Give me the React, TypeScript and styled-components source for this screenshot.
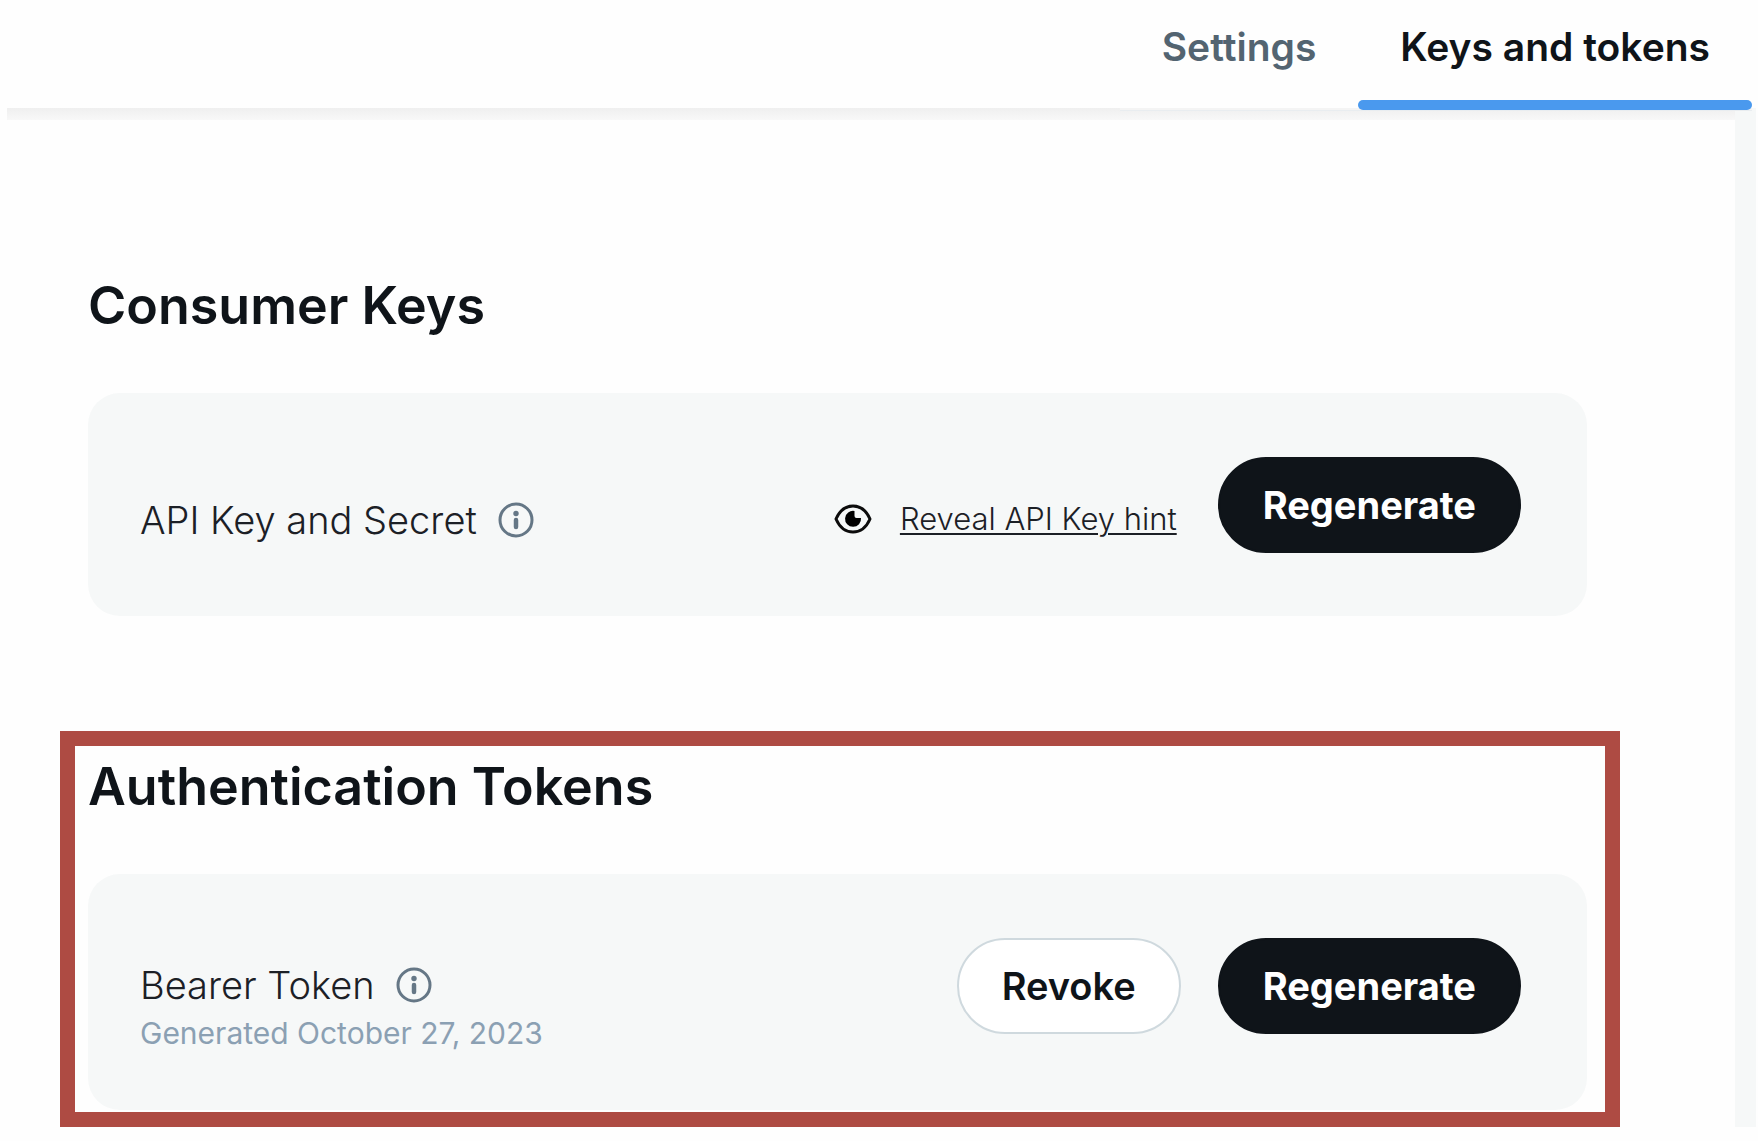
import React from 'react';
import styled, { createGlobalStyle } from 'styled-components';

const color = {
  ink: '#0f1419',
  text: '#1c2026',
  slate: '#536471',
  info: '#657786',
  muted: '#8ba0b3',
  accent: '#4a99ee',
  panel: '#f6f8f8',
  line: '#cfd9de',
  highlight: '#ae4b43',
};

const GlobalStyle = createGlobalStyle`
  *, *::before, *::after { box-sizing: border-box; }
  body {
    margin: 0;
    background: #fefefe;
    color: ${color.ink};
    font-family: Inter, 'Liberation Sans', sans-serif;
  }
`;

const Page = styled.div`
  display: flex;
  flex-direction: column;
  padding: 0 2px 14px 7px;
`;

const Header = styled.header`
  display: flex;
  justify-content: flex-end;
  padding-right: 4px;
`;

const Tabs = styled.nav`
  position: relative;
  display: flex;
  height: 108px;
  box-shadow: 0 2px 0 #f4f4f4, 0 3px 0 #e9edf0;
`;

const Tab = styled.a<{ $active?: boolean }>`
  position: relative;
  display: block;
  padding: 23px 42px 0;
  font-size: 39px;
  line-height: 48px;
  font-weight: 600;
  text-decoration: none;
  color: ${(p) => (p.$active ? color.ink : color.slate)};

  &::after {
    content: '';
    display: ${(p) => (p.$active ? 'block' : 'none')};
    position: absolute;
    left: 0;
    right: 0;
    bottom: -2px;
    height: 10px;
    border-radius: 5px;
    background: ${color.accent};
  }
`;

const Body = styled.div`
  display: flex;
  align-items: stretch;
`;

const Main = styled.main`
  flex: 1;
  min-width: 0;
`;

const HeaderShadow = styled.div`
  height: 12px;
  background: linear-gradient(#efefef, #f8f8f8);
`;

const Gutter = styled.aside`
  flex: none;
  width: 21px;
  background: ${color.panel};
`;

const Sections = styled.div`
  display: flex;
  flex-direction: column;
  gap: 98px;
  padding: 130px 115px 0 53px;
`;

const Section = styled.section<{ $highlighted?: boolean }>`
  border: 15px solid ${(p) => (p.$highlighted ? color.highlight : 'transparent')};
  padding: 11px 18px 2px 13px;
`;

const Heading = styled.h2`
  margin: 0 0 57px;
  font-size: 52px;
  line-height: 60px;
  font-weight: 600;
`;

const Card = styled.div`
  display: flex;
  justify-content: space-between;
  align-items: flex-start;
  padding: 64px 66px 63px 52px;
  border-radius: 32px;
  background: ${color.panel};
`;

const Credential = styled.div<{ $top: number }>`
  padding-top: ${(p) => p.$top}px;
`;

const Name = styled.div`
  display: flex;
  align-items: center;
  gap: 21px;
  font-size: 38px;
  line-height: 48px;
  font-weight: 300;
  color: ${color.text};
`;

const InfoButton = styled.button`
  display: flex;
  padding: 0;
  border: 0;
  background: none;
  color: ${color.info};
  cursor: pointer;
`;

const Meta = styled.div`
  margin-top: 10px;
  font-size: 30px;
  line-height: 28px;
  color: ${color.muted};
`;

const Actions = styled.div`
  display: flex;
  align-items: flex-start;
  gap: 37px;
`;

const Hint = styled.div`
  display: flex;
  align-items: center;
  gap: 28px;
  padding-top: 38px;
`;

const HintLink = styled.a`
  margin-right: 4px;
  font-size: 31px;
  line-height: 48px;
  font-weight: 300;
  color: ${color.text};
  text-decoration: underline;
  text-decoration-thickness: 2px;
  text-underline-offset: 3px;
`;

const Button = styled.button<{ $primary?: boolean }>`
  height: 96px;
  padding: 0 43px;
  border: 2px solid ${(p) => (p.$primary ? color.ink : color.line)};
  border-radius: 48px;
  background: ${(p) => (p.$primary ? color.ink : '#fff')};
  color: ${(p) => (p.$primary ? '#fff' : color.ink)};
  font-family: inherit;
  font-size: 38px;
  line-height: 48px;
  font-weight: ${(p) => (p.$primary ? 700 : 600)};
  cursor: pointer;
`;

const InfoIcon = () => (
  <svg width="36" height="36" viewBox="0 0 36 36" fill="none" aria-hidden="true">
    <circle cx="18" cy="18" r="16" stroke="currentColor" strokeWidth="3" />
    <circle cx="18" cy="11.5" r="2.7" fill="currentColor" />
    <path d="M18 18v7" stroke="currentColor" strokeWidth="4.500" strokeLinecap="round" />
  </svg>
);

const EyeIcon = () => (
  <svg width="38" height="30" viewBox="0 0 38 30" fill="none" aria-hidden="true">
    <path
      d="M2 15C5.5 7 11.5 2 19 2s13.500 5 17 13c-3.500 8-9.500 13-17 13S5.500 23 2 15Z"
      stroke="#0c0c0c"
      strokeWidth="3"
      strokeLinejoin="round"
    />
    <path d="M20.500 7a8 8 0 1 0 6.500 7h-4.500a2 2 0 0 1-2-2Z" fill="#000" />
  </svg>
);

export default function App() {
  return (
    <>
      <GlobalStyle />
      <Page>
        <Header>
          <Tabs>
            <Tab href="#settings">Settings</Tab>
            <Tab href="#keys" $active aria-current="page">
              Keys and tokens
            </Tab>
          </Tabs>
        </Header>
        <Body>
          <Main>
            <HeaderShadow />
            <Sections>
              <Section>
                <Heading>Consumer Keys</Heading>
                <Card>
                  <Credential $top={39}>
                    <Name>
                      API Key and Secret
                      <InfoButton type="button" aria-label="About API Key and Secret">
                        <InfoIcon />
                      </InfoButton>
                    </Name>
                  </Credential>
                  <Actions>
                    <Hint>
                      <EyeIcon />
                      <HintLink href="#hint">Reveal API Key hint</HintLink>
                    </Hint>
                    <Button type="button" $primary>
                      Regenerate
                    </Button>
                  </Actions>
                </Card>
              </Section>
              <Section $highlighted>
                <Heading>Authentication Tokens</Heading>
                <Card>
                  <Credential $top={23}>
                    <Name>
                      Bearer Token
                      <InfoButton type="button" aria-label="About Bearer Token">
                        <InfoIcon />
                      </InfoButton>
                    </Name>
                    <Meta>Generated October 27, 2023</Meta>
                  </Credential>
                  <Actions>
                    <Button type="button">Revoke</Button>
                    <Button type="button" $primary>
                      Regenerate
                    </Button>
                  </Actions>
                </Card>
              </Section>
            </Sections>
          </Main>
          <Gutter />
        </Body>
      </Page>
    </>
  );
}
